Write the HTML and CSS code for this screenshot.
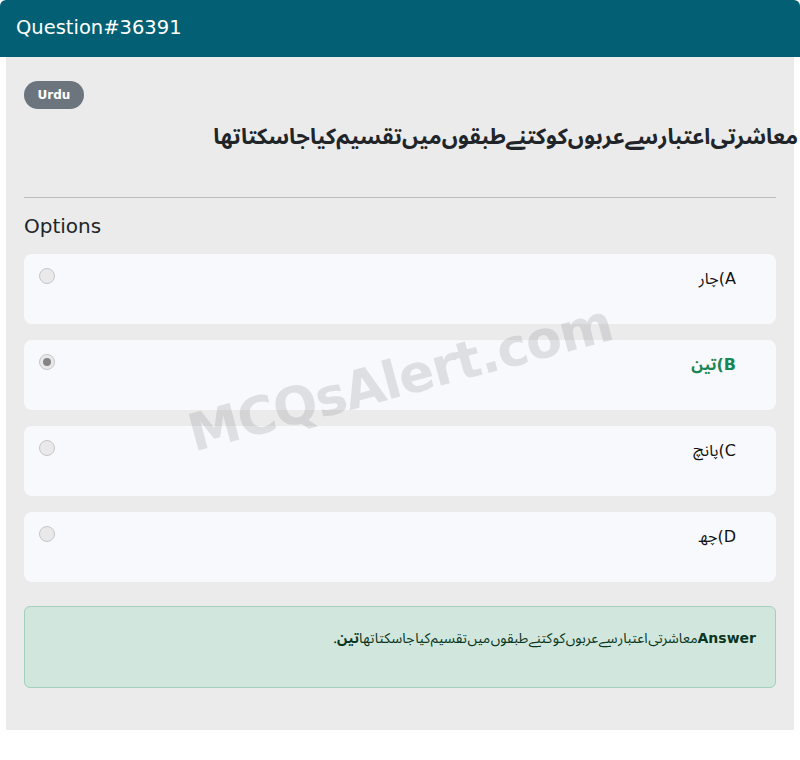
FILE: index.html
```html
<!DOCTYPE html>
<html>
<head>
<meta charset="utf-8">
<link rel="stylesheet" href="styles.css">
</head>
<body>
<div class="card">
  <div class="card-header">Question#36391</div>
  <div class="card-body">
    <span class="badge">Urdu</span>
    <h2 class="question urdu" dir="rtl">معاشرتی اعتبار سے عربوں کو کتنے طبقوں میں تقسیم کیا جاسکتا تھا</h2>
    <hr class="divider">
    <h3 class="options-title">Options</h3>
    <div class="options">
      <div class="option">
        <span class="radio"></span>
        <span class="label urdu" dir="rtl">A)چار</span>
      </div>
      <div class="option">
        <span class="radio checked"></span>
        <span class="label urdu correct" dir="rtl">B)تین</span>
      </div>
      <div class="option">
        <span class="radio"></span>
        <span class="label urdu" dir="rtl">C)پانچ</span>
      </div>
      <div class="option">
        <span class="radio"></span>
        <span class="label urdu" dir="rtl">D)چھ</span>
      </div>
    </div>
    <div class="answer urdu" dir="rtl">
      <p><strong class="answer-key">Answer</strong>معاشرتی اعتبار سے عربوں کو کتنے طبقوں میں تقسیم کیا جاسکتا تھا<strong>تین</strong>.</p>
    </div>
  </div>
  <div class="watermark">MCQsAlert.com</div>
</div>
</body>
</html>
```

FILE: styles.css
```css
* { box-sizing: border-box; }
html, body {
  margin: 0;
  padding: 0;
  background: #ffffff;
}
body {
  font-family: "DejaVu Sans", sans-serif;
  color: #212529;
}
.urdu {
  font-family: "Noto Sans Arabic UI", "DejaVu Sans", sans-serif;
}
.card {
  position: relative;
  width: 800px;
  overflow: hidden;
}
.card-header {
  height: 57px;
  line-height: 56px;
  padding: 0 16px;
  background: #035f73;
  color: #ffffff;
  font-size: 19.5px;
  border-radius: 6px 6px 0 0;
}
.card-body {
  margin: 0 6px;
  background: #ebebeb;
  padding: 24px 18px 24px 18px;
}
.badge {
  display: inline-block;
  height: 28px;
  line-height: 28px;
  padding: 0 13.5px;
  border-radius: 14px;
  background: #6c757d;
  color: #fff;
  font-size: 12px;
  font-weight: bold;
}
.question {
  margin: 8px -22px 0 0;
  font-size: 22px;
  font-weight: bold;
  line-height: 36px;
  text-align: right;
  word-spacing: -0.25em;
  color: #212529;
}
.divider {
  border: 0;
  border-top: 1px solid #bdbdbd;
  margin: 44px 0 0 0;
}
.options-title {
  margin: 16px 0 16px 0;
  font-size: 20px;
  font-weight: normal;
  line-height: 24px;
}
.options {
  display: flex;
  flex-direction: column;
  gap: 16px;
}
.option {
  display: flex;
  align-items: flex-start;
  height: 70px;
  padding: 12px 40px 0 15px;
  background: #f8f9fc;
  border-radius: 8px;
}
.radio {
  flex: none;
  width: 16px;
  height: 16px;
  margin-top: 2px;
  border-radius: 50%;
  border: 1px solid #c6c6c6;
  background: #e9e9ec;
  display: flex;
  align-items: center;
  justify-content: center;
}
.radio.checked::after {
  content: "";
  width: 8px;
  height: 8px;
  border-radius: 50%;
  background: #858585;
}
.label {
  margin-left: auto;
  font-size: 16px;
  line-height: 24px;
  color: #111;
}
.label.correct {
  color: #198754;
  font-weight: bold;
}
.answer {
  margin: 24px 0 18px 0;
  background: #d1e7dd;
  border: 1px solid #a3cfbb;
  border-radius: 6px;
  padding: 19px 19px 21px 19px;
  color: #0a3622;
  font-size: 14px;
}
.answer p {
  margin: 0 0 16px 0;
  line-height: 24px;
  word-spacing: -0.22em;
}
.answer-key {
  font-family: "DejaVu Sans", sans-serif;
}
.watermark {
  position: absolute;
  left: 0;
  top: 343px;
  width: 100%;
  text-align: center;
  font-size: 52px;
  font-weight: bold;
  letter-spacing: -1px;
  line-height: 70px;
  color: rgba(120, 120, 128, 0.2);
  transform: rotate(-15deg);
  pointer-events: none;
}
```
